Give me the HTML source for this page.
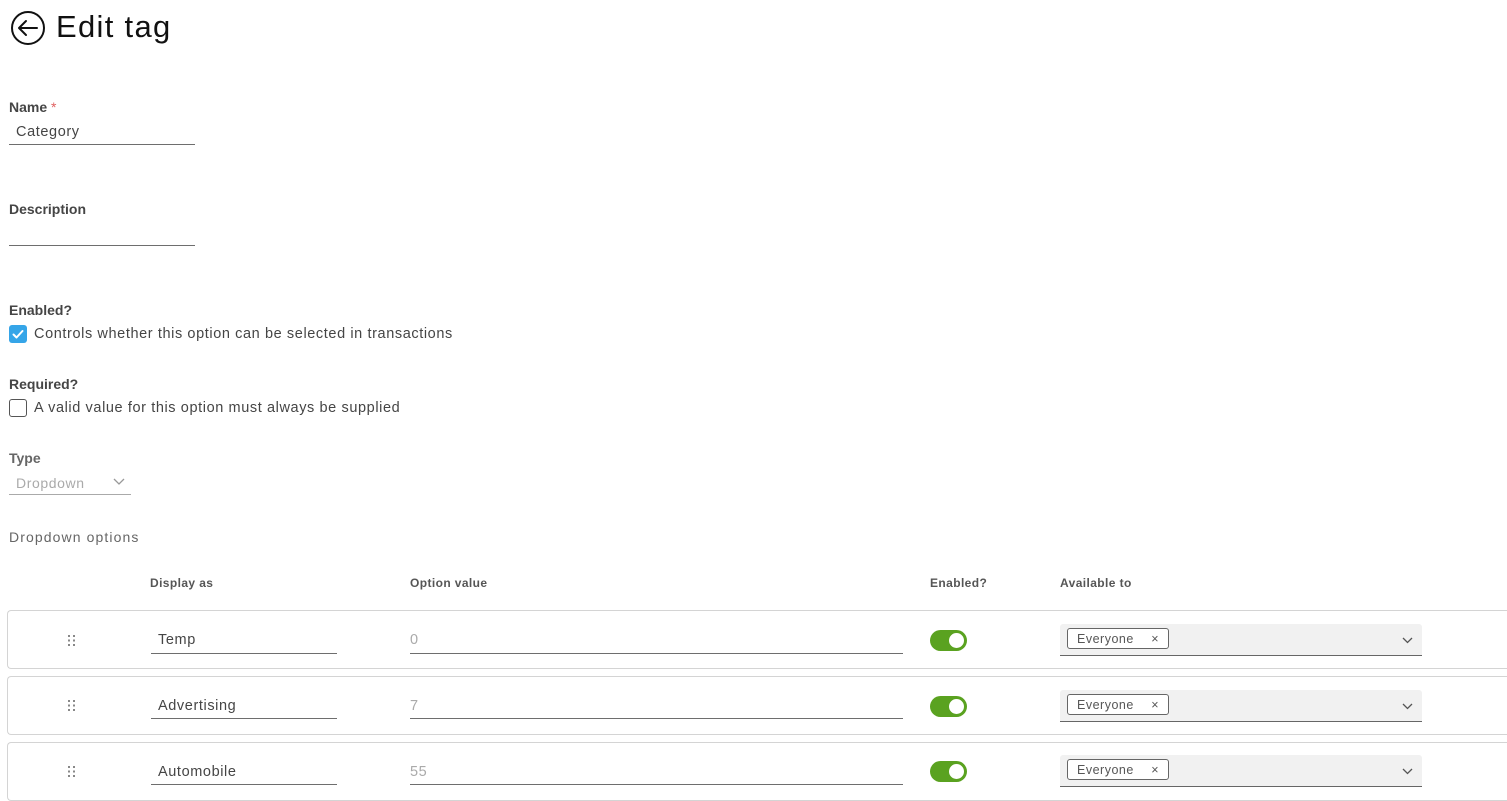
<!DOCTYPE html>
<html><head><meta charset="utf-8"><style>
*{margin:0;padding:0;box-sizing:border-box}
body{width:1507px;height:800px;overflow:hidden;background:#fff;font-family:"Liberation Sans",sans-serif;position:relative;color:#565656}
.a{position:absolute;white-space:nowrap}
.lbl{font-size:14px;font-weight:bold;color:#454545}
.txt{font-size:14.5px;color:#454545;letter-spacing:.6px}
.line{position:absolute;height:1px;background:#6e6e6e}
.hd{font-size:12px;font-weight:bold;color:#565656;letter-spacing:.4px}
.row{position:absolute;left:7px;width:1510px;height:59px;border:1px solid #d4d4d4;border-right:none;border-radius:4px 0 0 4px}
.tog{position:absolute;width:37px;height:21px;background:#5aa220;border-radius:11px}
.tog:after{content:"";position:absolute;right:3px;top:3px;width:15px;height:15px;border-radius:50%;background:#fff}
.sel{position:absolute;left:1060px;width:362px;height:32px;background:#f1f1f1;border-bottom:1px solid #666;border-radius:3px 3px 0 0}
.tag{position:absolute;left:7px;top:4px;width:102px;height:21px;border:1px solid #666;border-radius:3px;background:#fff;font-size:12.5px;color:#565656;padding:3px 0 0 9px;letter-spacing:.5px}
.tag span{position:absolute;right:9px;top:3px}
.dots{position:absolute;left:68px;width:8px;height:11px}
</style></head><body>
<svg class="a" style="left:10px;top:10px" width="36" height="36" viewBox="0 0 36 36"><circle cx="18" cy="18" r="16" fill="none" stroke="#111" stroke-width="2"/><path d="M9 18H27M16 11L9 18L16 25" fill="none" stroke="#111" stroke-width="2" stroke-linecap="round" stroke-linejoin="round"/></svg>
<div class="a" style="left:56px;top:9px;font-size:31px;color:#111;letter-spacing:1.3px">Edit tag</div>

<div class="a lbl" style="left:9px;top:99px">Name <span style="color:#e06060;font-weight:normal">*</span></div>
<div class="a txt" style="left:16px;top:124px">Category</div>
<div class="line" style="left:9px;top:144px;width:186px"></div>

<div class="a lbl" style="left:9px;top:201px">Description</div>
<div class="line" style="left:9px;top:245px;width:186px"></div>

<div class="a lbl" style="left:9px;top:302px">Enabled?</div>
<div class="a" style="left:9px;top:325px;width:18px;height:18px;background:#35a5e8;border-radius:3px"><svg width="18" height="18"><path d="M4.5 9.5L7.5 12.5L13.5 6" fill="none" stroke="#fff" stroke-width="2" stroke-linecap="round" stroke-linejoin="round"/></svg></div>
<div class="a txt" style="left:34px;top:326px">Controls whether this option can be selected in transactions</div>

<div class="a lbl" style="left:9px;top:376px">Required?</div>
<div class="a" style="left:9px;top:399px;width:18px;height:18px;border:1px solid #555;border-radius:3px"></div>
<div class="a txt" style="left:34px;top:400px">A valid value for this option must always be supplied</div>

<div class="a lbl" style="left:9px;top:450px;color:#666">Type</div>
<div class="a" style="left:16px;top:475px;font-size:14px;color:#aaa;letter-spacing:.6px">Dropdown</div>
<svg class="a" style="left:113px;top:478px" width="12" height="8"><path d="M1 1L6 6L11 1" fill="none" stroke="#999" stroke-width="1.3"/></svg>
<div class="line" style="left:9px;top:494px;width:122px;background:#aaa"></div>

<div class="a" style="left:9px;top:529px;font-size:14px;color:#666;letter-spacing:1.1px">Dropdown options</div>

<div class="a hd" style="left:150px;top:576px">Display as</div>
<div class="a hd" style="left:410px;top:576px">Option value</div>
<div class="a hd" style="left:930px;top:576px">Enabled?</div>
<div class="a hd" style="left:1060px;top:576px">Available to</div>

<div class="row" style="top:610px"></div>
<div class="row" style="top:676px"></div>
<div class="row" style="top:742px"></div>

<svg class="dots" style="top:635px" viewBox="0 0 8 11"><g fill="#888"><rect x="0" y="0" width="2" height="2"/><rect x="5" y="0" width="2" height="2"/><rect x="0" y="4.5" width="2" height="2"/><rect x="5" y="4.5" width="2" height="2"/><rect x="0" y="9" width="2" height="2"/><rect x="5" y="9" width="2" height="2"/></g></svg>
<svg class="dots" style="top:700px" viewBox="0 0 8 11"><g fill="#888"><rect x="0" y="0" width="2" height="2"/><rect x="5" y="0" width="2" height="2"/><rect x="0" y="4.5" width="2" height="2"/><rect x="5" y="4.5" width="2" height="2"/><rect x="0" y="9" width="2" height="2"/><rect x="5" y="9" width="2" height="2"/></g></svg>
<svg class="dots" style="top:766px" viewBox="0 0 8 11"><g fill="#888"><rect x="0" y="0" width="2" height="2"/><rect x="5" y="0" width="2" height="2"/><rect x="0" y="4.5" width="2" height="2"/><rect x="5" y="4.5" width="2" height="2"/><rect x="0" y="9" width="2" height="2"/><rect x="5" y="9" width="2" height="2"/></g></svg>

<div class="a txt" style="left:158px;top:632px">Temp</div>
<div class="line" style="left:151px;top:653px;width:186px"></div>
<div class="a txt" style="left:410px;top:632px;color:#aaa">0</div>
<div class="line" style="left:410px;top:653px;width:493px"></div>
<div class="tog" style="left:930px;top:630px"></div>
<div class="sel" style="top:624px"><div class="tag">Everyone<span>×</span></div><svg style="position:absolute;right:9px;top:13px" width="11" height="7"><path d="M1 1L5.5 5.5L10 1" fill="none" stroke="#555" stroke-width="1.3"/></svg></div>

<div class="a txt" style="left:158px;top:698px">Advertising</div>
<div class="line" style="left:151px;top:718px;width:186px"></div>
<div class="a txt" style="left:410px;top:698px;color:#aaa">7</div>
<div class="line" style="left:410px;top:718px;width:493px"></div>
<div class="tog" style="left:930px;top:696px"></div>
<div class="sel" style="top:690px"><div class="tag">Everyone<span>×</span></div><svg style="position:absolute;right:9px;top:13px" width="11" height="7"><path d="M1 1L5.5 5.5L10 1" fill="none" stroke="#555" stroke-width="1.3"/></svg></div>

<div class="a txt" style="left:158px;top:764px">Automobile</div>
<div class="line" style="left:151px;top:784px;width:186px"></div>
<div class="a txt" style="left:410px;top:764px;color:#aaa">55</div>
<div class="line" style="left:410px;top:784px;width:493px"></div>
<div class="tog" style="left:930px;top:761px"></div>
<div class="sel" style="top:755px"><div class="tag">Everyone<span>×</span></div><svg style="position:absolute;right:9px;top:13px" width="11" height="7"><path d="M1 1L5.5 5.5L10 1" fill="none" stroke="#555" stroke-width="1.3"/></svg></div>
</body></html>
